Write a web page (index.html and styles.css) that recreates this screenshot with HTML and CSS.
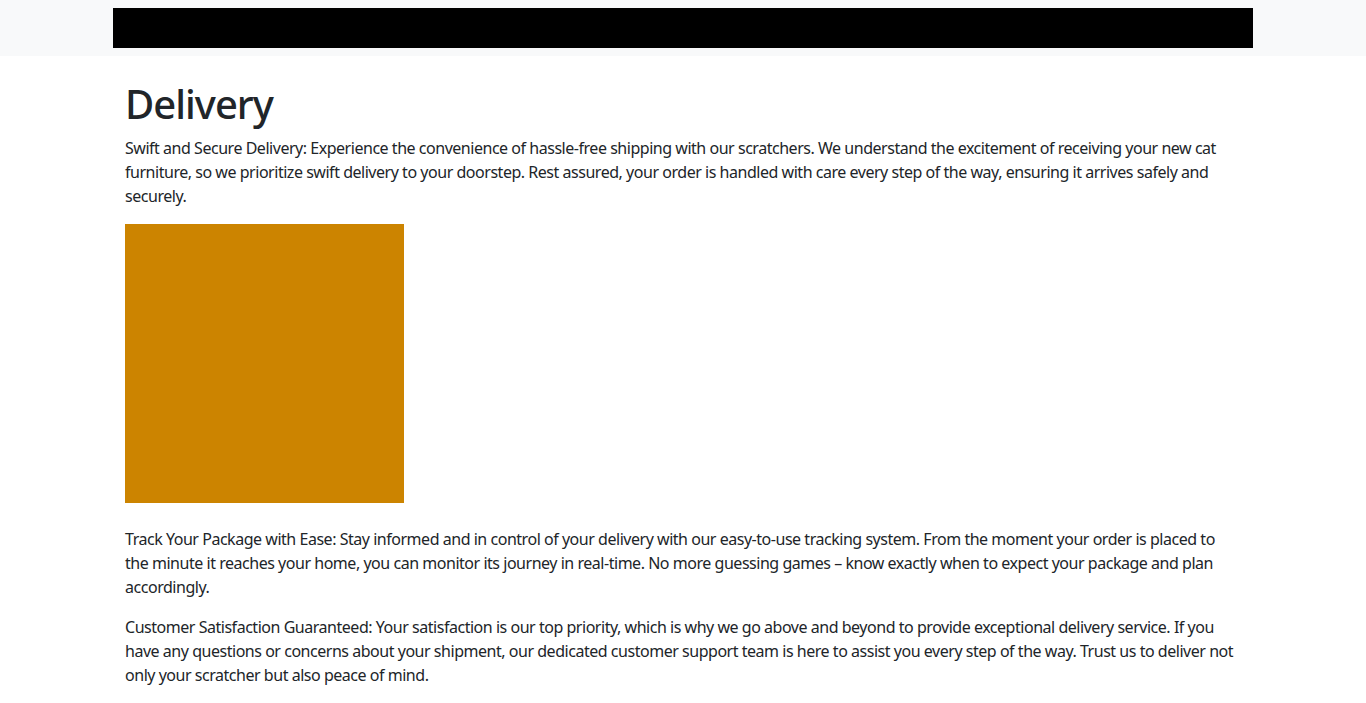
FILE: index.html
```html
<!DOCTYPE html>
<html lang="en">
<head>
<meta charset="utf-8">
<title>Delivery</title>
<link rel="stylesheet" href="styles.css">
</head>
<body>
<header class="topbar">
  <div class="container">
    <div class="banner"></div>
  </div>
</header>
<main class="container content">
  <h1 class="title">Delivery</h1>
  <p>Swift and Secure Delivery: Experience the convenience of hassle-free shipping with our scratchers. We understand the excitement of receiving your new cat furniture, so we prioritize swift delivery to your doorstep. Rest assured, your order is handled with care every step of the way, ensuring it arrives safely and securely.</p>
  <div class="picture"></div>
  <p>Track Your Package with Ease: Stay informed and in control of your delivery with our easy-to-use tracking system. From the moment your order is placed to the minute it reaches your home, you can monitor its journey in real-time. No more guessing games – know exactly when to expect your package and plan accordingly.</p>
  <p>Customer Satisfaction Guaranteed: Your satisfaction is our top priority, which is why we go above and beyond to provide exceptional delivery service. If you have any questions or concerns about your shipment, our dedicated customer support team is here to assist you every step of the way. Trust us to deliver not only your scratcher but also peace of mind.</p>
</main>
</body>
</html>
```
FILE: styles.css
```css
* { box-sizing: border-box; }
html, body { margin: 0; padding: 0; }
body {
  font-family: "Noto Sans", "Open Sans", sans-serif;
  font-size: 16px;
  line-height: 24px;
  letter-spacing: -0.47px;
  color: #212529;
  background: #fff;
}
.container {
  width: 1140px;
  margin: 0 auto;
}
.topbar {
  background: #f8f9fa;
  padding: 8px 0;
}
.topbar .container { padding: 0; }
.banner {
  height: 40px;
  background: #000;
}
.content {
  padding: 24px 12px 0;
}
.title {
  font-size: 40px;
  line-height: 48px;
  font-weight: 500;
  letter-spacing: -1px;
  margin: 0 0 8px;
}
p { margin: 0 0 16px; }
.picture {
  width: 279px;
  height: 279px;
  background: #cc8400;
  margin-bottom: 24px;
}
```
